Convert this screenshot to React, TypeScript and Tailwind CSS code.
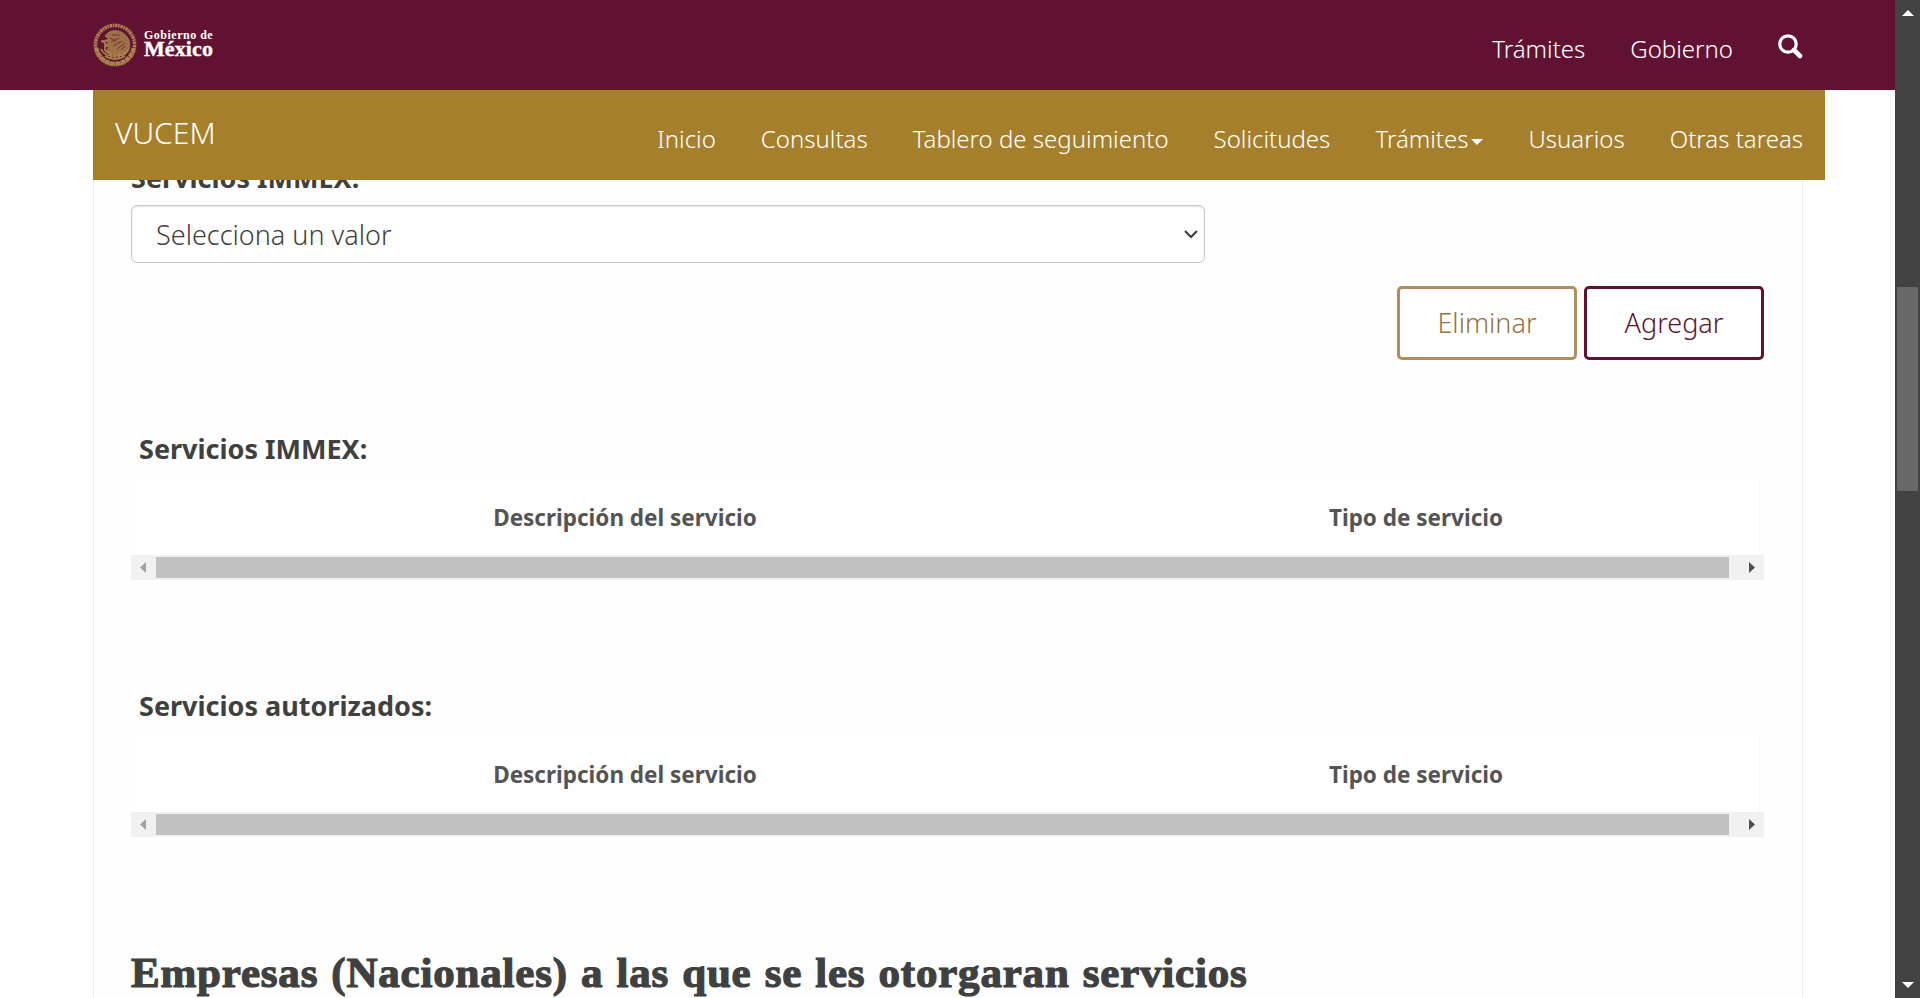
import React from "react";

const navItems = [
  { label: "Inicio" },
  { label: "Consultas" },
  { label: "Tablero de seguimiento" },
  { label: "Solicitudes" },
  { label: "Trámites", caret: true },
  { label: "Usuarios" },
  { label: "Otras tareas" },
];

function Seal() {
  return (
    <svg width="44" height="44" viewBox="0 0 44 44" className="shrink-0" fill="none" stroke="#a8814c">
      <circle cx="22" cy="22" r="19.6" strokeWidth="3.6" strokeDasharray="2.6 0.6 1.6 0.6" />
      <path d="M3.5 25a18.8 18.8 0 0 0 37 0" strokeWidth="4" strokeDasharray="4.5 0.8" />
      <path d="M12 13c4-6 12-7 18-3 6 4 8 10 6 16-1 4-4 6-7 7l-6-2-6 1-4-4 3-4-5-1 5-4-6-1 6-2z" fill="#a8814c" fillOpacity="0.85" strokeWidth="0.8" />
      <path d="M8 18c4 0 5 4 4 7s2 5 5 4M8 26c4 9 21 10 28 0M12 33c6 4 14 4 20 0M18 30v5M22 31v5M26 30v5" strokeWidth="1.8" />
      <path d="M17 15l6 3M18 19l8-4M20 23l9-5M24 26l8-6M19 12l8 0M28 27l4-4" stroke="#611232" strokeWidth="0.7" />
    </svg>
  );
}

function ScrollBar() {
  return (
    <div className="flex h-[25px] items-center bg-[#f1f1f1]">
      <div className="flex w-[25px] pl-[9px]">
        <svg width="6" height="11" viewBox="0 0 6 11"><path d="M6 0v11L0 5.5z" fill="#a3a3a3" /></svg>
      </div>
      <div className="h-[21px] w-[1573px] bg-[#c1c1c1]" />
      <div className="flex flex-1 justify-end pr-[9px]">
        <svg width="6" height="11" viewBox="0 0 6 11"><path d="M0 0v11l6-5.5z" fill="#505050" /></svg>
      </div>
    </div>
  );
}

function ServiceTable({ title }: { title: string }) {
  return (
    <section className="h-[257px] w-[1633px]">
      <h4 className="h-[49px] pl-[8px] text-[27px] leading-[40px] font-bold text-[#404041]">{title}</h4>
      <div className="mr-[4px] flex h-[77px] items-center border-r border-[#f8f8f8] bg-white pt-[2px] text-[22.5px] leading-[32px] font-bold text-[#545454]">
        <div className="w-[988px] text-center">Descripción del servicio</div>
        <div className="flex-1 pr-[46px] text-center">Tipo de servicio</div>
      </div>
      <ScrollBar />
    </section>
  );
}

export default function App() {
  return (
    <div className="flex h-[998px] w-[1920px] overflow-hidden bg-white font-['Noto_Sans','Open_Sans',sans-serif] font-light">
      <div className="flex w-[1895px] flex-col">
        <header className="flex h-[90px] shrink-0 items-center justify-between bg-[#611232] pr-[92px] pl-[93px] text-white">
          <div className="flex items-center gap-[7px]">
            <Seal />
            <div className="flex flex-col pb-[4px] font-['Liberation_Serif',serif] whitespace-nowrap">
              <span className="text-[12px] leading-[12px] font-bold tracking-[0.5px]">Gobierno de</span>
              <span className="text-[22px] leading-[16px] font-bold tracking-[0.1px] [-webkit-text-stroke:0.4px_white]">México</span>
            </div>
          </div>
          <div className="flex items-center gap-[45px] text-[24px] leading-[34px]">
            <span className="pt-[7px]">Trámites</span>
            <span className="pt-[7px]">Gobierno</span>
            <svg width="25" height="25" viewBox="0 0 25 25" className="mt-[3px]" fill="none" stroke="white">
              <circle cx="10" cy="10" r="8.2" strokeWidth="3.2" />
              <path d="M16 16l6 6" strokeWidth="4.6" strokeLinecap="round" />
            </svg>
          </div>
        </header>
        <nav className="ml-[93px] flex h-[90px] w-[1732px] shrink-0 items-center justify-between bg-[#a57f2c] pr-[22px] pl-[22px] text-white">
          <span className="pb-[5px] text-[30px] leading-[40px]">VUCEM</span>
          <div className="flex items-center gap-[45px] pt-[7px] text-[24px] leading-[34px]">
            {navItems.map((item) => (
              <span key={item.label} className="flex items-center whitespace-nowrap">
                {item.label}
                {item.caret && (
                  <svg width="12" height="6" viewBox="0 0 12 6" className="mt-[6px] ml-[3px]"><path d="M0 0h12L6 6z" fill="white" /></svg>
                )}
              </span>
            ))}
          </div>
        </nav>
        <main className="ml-[93px] h-[818px] w-[1710px] shrink-0 overflow-hidden border-x border-[#eeeeee] bg-[#fefefe] pl-[37px]">
          <div className="-mt-[22px] h-[47px] text-[27px] leading-[40px] font-bold text-[#404041]">Servicios IMMEX:</div>
          <div className="flex h-[58px] w-[1074px] items-center justify-between rounded-[6px] border border-[#c8c8c8] bg-white pr-[6px] pl-[24px] text-[27px] text-[#404041] shadow-[inset_0_1px_2px_rgba(0,0,0,0.1)]">
            <span className="pt-[2px]">Selecciona un valor</span>
            <svg width="14" height="9" viewBox="0 0 14 9" fill="none"><path d="M1 1l6 6 6-6" stroke="#404041" strokeWidth="2.2" /></svg>
          </div>
          <div className="mt-[23px] flex h-[74px] w-[1633px] justify-end gap-[7px] text-[27px]">
            <button className="w-[180px] rounded-[5px] border-3 border-[#b38e5d] bg-white text-[#977340]">Eliminar</button>
            <button className="w-[180px] rounded-[5px] border-3 border-[#611232] bg-white text-[#611232]">Agregar</button>
          </div>
          <div className="mt-[69px]">
            <ServiceTable title="Servicios IMMEX:" />
            <ServiceTable title="Servicios autorizados:" />
          </div>
          <h2 className="mt-[2px] font-['Liberation_Serif',serif] text-[43px] leading-[56px] font-bold tracking-[0.8px] [word-spacing:1.6px] whitespace-nowrap text-[#404041] [-webkit-text-stroke:1.2px_#404041]">
            Empresas (Nacionales) a las que se les otorgaran servicios
          </h2>
        </main>
      </div>
      <aside className="flex w-[25px] flex-col items-center bg-[#424242]">
        <svg width="12" height="6" viewBox="0 0 12 6" className="mt-[10px]"><path d="M0 6h12L6 0z" fill="white" /></svg>
        <div className="mt-[271px] h-[204px] w-[21px] bg-[#686868]" />
        <svg width="12" height="6" viewBox="0 0 12 6" className="mt-auto mb-[10px]"><path d="M0 0h12L6 6z" fill="white" /></svg>
      </aside>
    </div>
  );
}
